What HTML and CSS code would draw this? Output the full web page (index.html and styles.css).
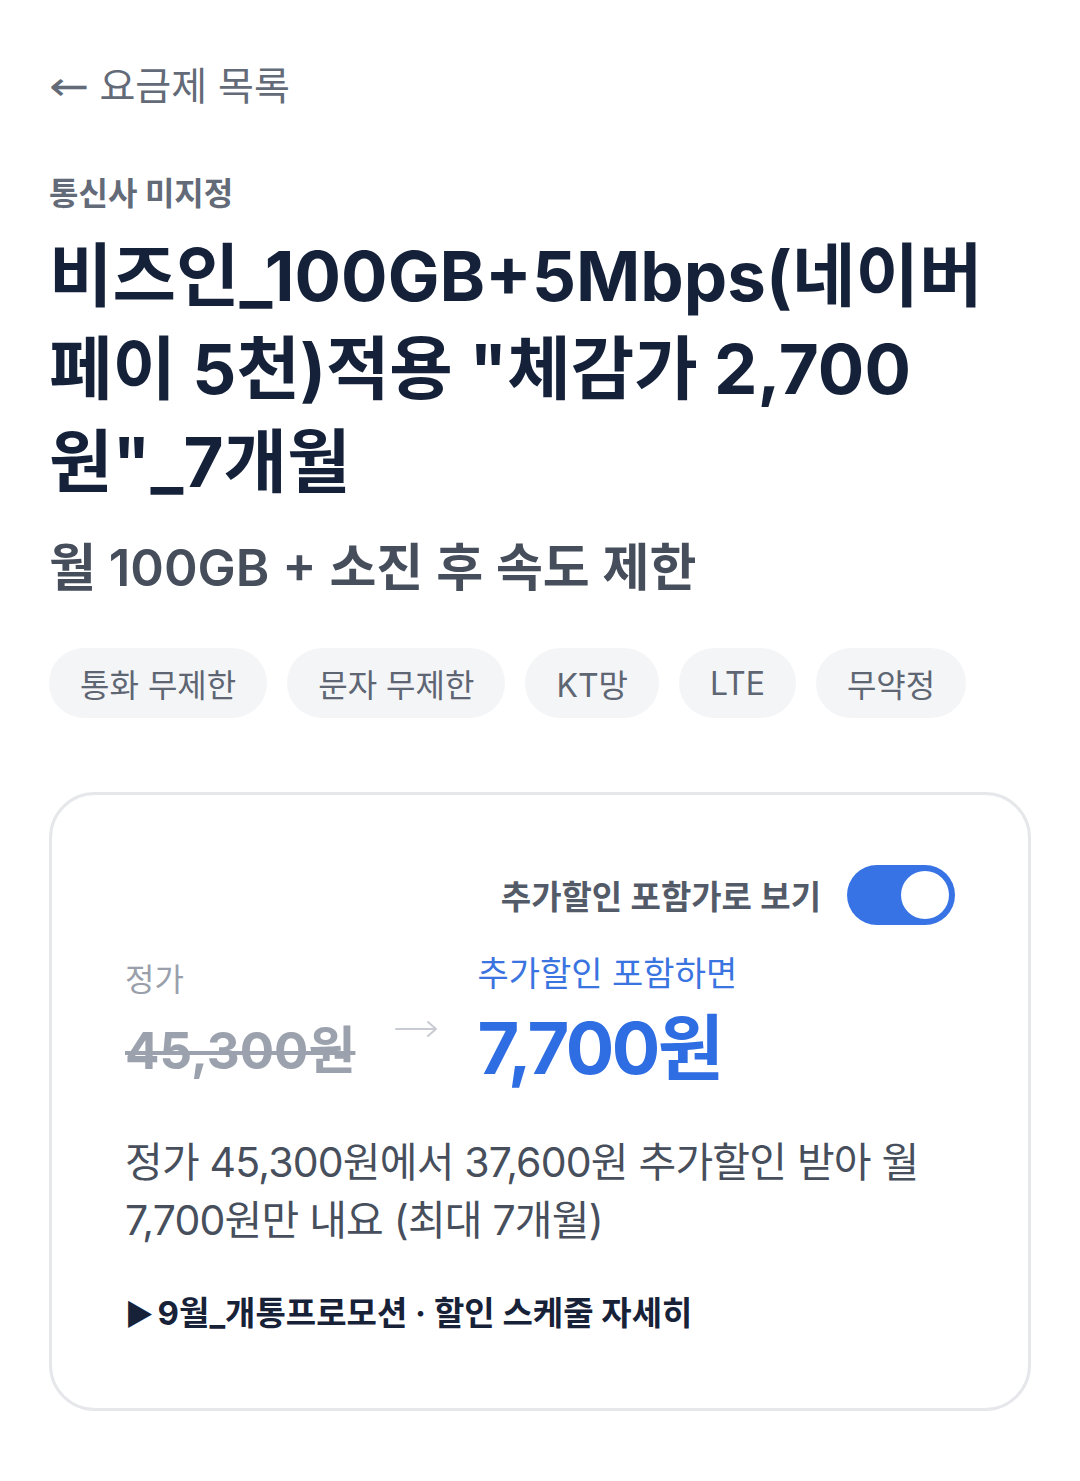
FILE: index.html
```html
<!DOCTYPE html>
<html lang="ko">

<head>
    <meta charset="UTF-8">
    <meta name="viewport" content="width=device-width, initial-scale=1.0">
    <title>요금제 상세</title>
    <link rel="stylesheet" href="styles.css">
</head>

<body>
    <main class="page">
        <a class="back-link" href="#"><span class="arrow">←</span> 요금제 목록</a>

        <p class="carrier">통신사 미지정</p>
        <h1 class="plan-title">비즈인_100GB+5Mbps(네이버페이 5천)적용 "체감가 2,700원"_7개월</h1>
        <p class="plan-summary">월 100GB + 소진 후 속도 제한</p>

        <ul class="tags">
            <li>통화 무제한</li>
            <li>문자 무제한</li>
            <li>KT망</li>
            <li>LTE</li>
            <li>무약정</li>
        </ul>

        <section class="price-card">
            <div class="toggle-row">
                <span class="toggle-label">추가할인 포함가로 보기</span>
                <span class="toggle on"><span class="knob"></span></span>
            </div>

            <div class="price-row">
                <div class="price-col">
                    <span class="price-caption">정가</span>
                    <span class="price-old">45,300원</span>
                </div>
                <svg class="price-arrow" width="44" height="20" viewBox="0 0 44 20">
                    <path d="M1 10 H41 M33 3 L41 10 L33 17" fill="none" stroke="#c8ccd2" stroke-width="2" stroke-linecap="round" stroke-linejoin="round"/>
                </svg>
                <div class="price-col">
                    <span class="price-caption blue">추가할인 포함하면</span>
                    <span class="price-new">7,700원</span>
                </div>
            </div>

            <p class="price-desc">정가 45,300원에서 37,600원 추가할인 받아 월 7,700원만 내요 (최대 7개월)</p>

            <a class="promo-link" href="#"><span class="tri">▶</span>9월_개통프로모션 · 할인 스케줄 자세히</a>
        </section>
    </main>
</body>

</html>
```

FILE: styles.css
```css
body {
    margin: 0;
    background-color: #ffffff;
    font-family: Inter, "Noto Sans CJK KR", sans-serif;
    color: #172238;
}

.page {
    padding: 58px 49px 70px;
}

/* header */
.back-link {
    display: block;
    font-size: 39px;
    line-height: 56px;
    color: #636a78;
    text-decoration: none;
}

.back-link .arrow {
    display: inline-block;
    font-family: "DejaVu Sans", sans-serif;
    font-size: 40px;
    transform: scaleX(1.2);
    transform-origin: left center;
    margin-right: 6px;
}

.carrier {
    margin: 58px 0 0 0;
    font-size: 32px;
    line-height: 44px;
    font-weight: 700;
    color: #636a78;
}

.plan-title {
    max-width: 950px;
    margin: 14px 0 0 0;
    font-size: 69px;
    line-height: 93px;
    font-weight: 700;
    letter-spacing: 0;
    color: #142139;
}

.plan-summary {
    margin: 27px 0 0 0;
    font-size: 51px;
    line-height: 64px;
    font-weight: 600;
    color: #464e5c;
}

/* tags */
.tags {
    display: flex;
    flex-wrap: wrap;
    gap: 20px;
    margin: 48px 0 0 0;
    padding: 0;
    list-style: none;
}

.tags li {
    height: 70px;
    padding: 0 31px;
    display: flex;
    align-items: center;
    border-radius: 35px;
    background-color: #f4f5f7;
    font-size: 32px;
    color: #5e6573;
}

/* price card */
.price-card {
    margin-top: 74px;
    padding: 70px 73px 73px;
    border: 3px solid #e6e7eb;
    border-radius: 46px;
}

.toggle-row {
    display: flex;
    justify-content: flex-end;
    align-items: center;
    gap: 26px;
}

.toggle-label {
    font-size: 33px;
    font-weight: 600;
    color: #545b68;
}

.toggle {
    width: 108px;
    height: 60px;
    border-radius: 30px;
    background-color: #3873e6;
    display: flex;
    align-items: center;
    justify-content: flex-end;
    padding: 0 6px;
    box-sizing: border-box;
}

.knob {
    width: 48px;
    height: 48px;
    border-radius: 50%;
    background-color: #ffffff;
}

.price-row {
    display: flex;
    align-items: flex-start;
    margin-top: 30px;
}

.price-col {
    display: flex;
    flex-direction: column;
}

.price-caption {
    font-size: 32px;
    line-height: 50px;
    color: #9aa0ab;
}

.price-caption.blue {
    margin-top: -6px;
    font-size: 34px;
    color: #3a74e0;
}

.price-old {
    margin-top: 14px;
    font-size: 51px;
    line-height: 64px;
    font-weight: 700;
    color: #9ca2ad;
    text-decoration: line-through;
    text-decoration-thickness: 4px;
}

.price-arrow {
    flex: none;
    margin: 64px 38px 0 40px;
}

.price-new {
    margin-top: 4px;
    font-size: 72px;
    line-height: 90px;
    font-weight: 700;
    letter-spacing: -2.5px;
    color: #2f6de3;
}

.price-desc {
    margin: 40px 0 0 0;
    font-size: 41px;
    line-height: 58px;
    letter-spacing: -0.8px;
    color: #474f5d;
}

.promo-link {
    display: block;
    margin-top: 38px;
    font-size: 33px;
    font-weight: 700;
    color: #172238;
    text-decoration: none;
}

.promo-link .tri {
    font-size: 30px;
    margin-right: 4px;
}
```
